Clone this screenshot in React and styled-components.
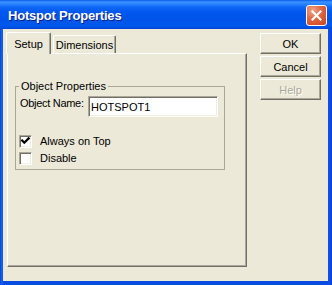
import React from 'react';
import styled, { createGlobalStyle } from 'styled-components';

const Global = createGlobalStyle`
  html, body { margin: 0; padding: 0; background: #ECE9D8; }
  body {
    width: 332px; height: 285px; overflow: hidden;
    font-family: "Liberation Sans", Arial, sans-serif;
    font-size: 11px; color: #000;
  }
  * { box-sizing: border-box; }
`;

const Window = styled.div`
  width: 332px;
  height: 285px;
  display: flex;
  flex-direction: column;
  background: linear-gradient(to right, #0840D4 0px, #166BF0 2px, #0A4BE0 3px, #0A4BE0 328px, #0C55EC 329px, #0843D8 331px);
`;

const TitleBar = styled.div`
  height: 29px;
  flex: none;
  display: flex;
  align-items: center;
  justify-content: space-between;
  padding: 0 5px 0 8px;
  background: linear-gradient(to bottom,
    #0A5BEA 0px, #3D91FF 2px, #2B84FF 4px, #0F68F6 7px,
    #0058EE 12px, #0054E6 20px, #0059EE 25px, #004DDD 28px, #0045D5 29px);
`;

const Title = styled.div`
  font-family: "Liberation Sans", Arial, sans-serif;
  font-weight: bold;
  font-size: 13px;
  color: #fff;
  text-shadow: 1px 1px 0 #0A1E8C;
  letter-spacing: -0.2px;
  margin-top: 1px;
`;

const CloseButton = styled.div`
  width: 21px;
  height: 21px;
  margin-top: 2px;
  border: 1px solid #fff;
  border-radius: 3px;
  background: radial-gradient(circle at 30% 25%, #EFA58C 0%, #E0653F 45%, #C7441F 100%);
  display: flex;
  align-items: center;
  justify-content: center;
`;

const Client = styled.div`
  flex: 1;
  margin: 0 4px 4px 3px;
  background: #ECE9D8;
  display: flex;
  gap: 13px;
  padding: 3px 7px 0 3px;
`;

const LeftColumn = styled.div`
  width: 241px;
  display: flex;
  flex-direction: column;
`;

const TabStrip = styled.div`
  height: 21px;
  display: flex;
  align-items: flex-end;
  position: relative;
  z-index: 1;
`;

const Tab = styled.div`
  width: ${p => p.$w}px;
  height: ${p => (p.$active ? 22 : 18)}px;
  margin-bottom: ${p => (p.$active ? -1 : 0)}px;
  margin-left: ${p => (p.$active ? 0 : 2)}px;
  padding-top: ${p => (p.$active ? 0 : 1)}px;
  background: #ECE9D8;
  border-top: 1px solid #fff;
  border-left: 1px solid #fff;
  border-right: 1px solid #716F64;
  box-shadow: inset -1px 0 0 #ACA899;
  border-radius: 2px 2px 0 0;
  display: flex;
  align-items: center;
  justify-content: center;
  white-space: nowrap;
`;

const Panel = styled.div`
  margin-left: 1px;
  width: 240px;
  height: 214px;
  border-top: 1px solid #fff;
  border-left: 1px solid #fff;
  border-right: 1px solid #716F64;
  border-bottom: 1px solid #716F64;
  box-shadow: inset -1px -1px 0 #ACA899;
  padding: 26px 0 0 7px;
`;

const Group = styled.fieldset`
  margin: 0;
  padding: 0 0 4px 0;
  width: 210px;
  height: 90px;
  border: 1px solid #A9A797;
  min-width: 0;
`;

const Legend = styled.legend`
  margin-left: 3px;
  padding: 0 2px;
  line-height: 13px;
  font-size: 11px;
`;

const GroupBody = styled.div`
  padding: 3px 0 0 3px;
  display: flex;
  flex-direction: column;
`;

const NameRow = styled.div`
  display: flex;
  align-items: flex-start;
`;

const NameLabel = styled.label`
  width: 69px;
  padding-left: 1px;
  margin-top: 1px;
  line-height: 13px;
  letter-spacing: -0.3px;
  white-space: nowrap;
`;

const TextBox = styled.div`
  width: 130px;
  height: 21px;
  background: #fff;
  border-top: 1px solid #ACA899;
  border-left: 1px solid #ACA899;
  border-right: 1px solid #fff;
  border-bottom: 1px solid #fff;
  box-shadow: inset 1px 1px 0 #716F64, inset -1px -1px 0 #F1EFE2;
  padding: 0 0 0 2px;
  display: flex;
  align-items: center;
  font-size: 11px;
`;

const CheckRow = styled.div`
  display: flex;
  align-items: center;
  height: 13px;
  margin-top: ${p => p.$gap}px;
`;

const Box = styled.div`
  width: 13px;
  height: 13px;
  background: #fff;
  border-top: 1px solid #ACA899;
  border-left: 1px solid #ACA899;
  border-right: 1px solid #fff;
  border-bottom: 1px solid #fff;
  box-shadow: inset 1px 1px 0 #716F64, inset -1px -1px 0 #F1EFE2;
  flex: none;
`;

const CheckLabel = styled.span`
  margin-left: 8px;
  line-height: 13px;
`;

const ButtonColumn = styled.div`
  display: flex;
  flex-direction: column;
  gap: 2px;
  padding-top: 1px;
`;

const Button = styled.div`
  width: 61px;
  height: 21px;
  background: #ECE9D8;
  border-top: 1px solid #fff;
  border-left: 1px solid #fff;
  border-right: 1px solid #716F64;
  border-bottom: 1px solid #716F64;
  box-shadow: inset -1px -1px 0 #ACA899;
  display: flex;
  align-items: center;
  justify-content: center;
  color: ${p => (p.$disabled ? '#ACA899' : '#000')};
  text-shadow: ${p => (p.$disabled ? '1px 1px 0 #fff' : 'none')};
`;

const CheckMark = () => (
  <svg width="11" height="11" viewBox="0 0 11 11" style={{ display: 'block' }}>
    <path d="M2.2 4.6 L4.3 6.7 L8.6 2.4" fill="none" stroke="#000" strokeWidth="2.3" strokeLinecap="square" />
  </svg>
);

const Checkbox = ({ checked, label, gap }) => (
  <CheckRow $gap={gap}>
    <Box>{checked && <CheckMark />}</Box>
    <CheckLabel>{label}</CheckLabel>
  </CheckRow>
);

export default function App() {
  return (
    <>
      <Global />
      <Window>
        <TitleBar>
          <Title>Hotspot Properties</Title>
          <CloseButton>
            <svg width="11" height="11" viewBox="0 0 11 11">
              <path d="M1.5 1.5 L9.5 9.5 M9.5 1.5 L1.5 9.5" stroke="#fff" strokeWidth="2.2" strokeLinecap="square" />
            </svg>
          </CloseButton>
        </TitleBar>
        <Client>
          <LeftColumn>
            <TabStrip>
              <Tab $active $w={45}>Setup</Tab>
              <Tab $w={63}>Dimensions</Tab>
            </TabStrip>
            <Panel>
              <Group>
                <Legend>Object Properties</Legend>
                <GroupBody>
                  <NameRow>
                    <NameLabel>Object Name:</NameLabel>
                    <TextBox>HOTSPOT1</TextBox>
                  </NameRow>
                  <Checkbox checked label="Always on Top" gap={18} />
                  <Checkbox label="Disable" gap={4} />
                </GroupBody>
              </Group>
            </Panel>
          </LeftColumn>
          <ButtonColumn>
            <Button>OK</Button>
            <Button>Cancel</Button>
            <Button $disabled>Help</Button>
          </ButtonColumn>
        </Client>
      </Window>
    </>
  );
}
